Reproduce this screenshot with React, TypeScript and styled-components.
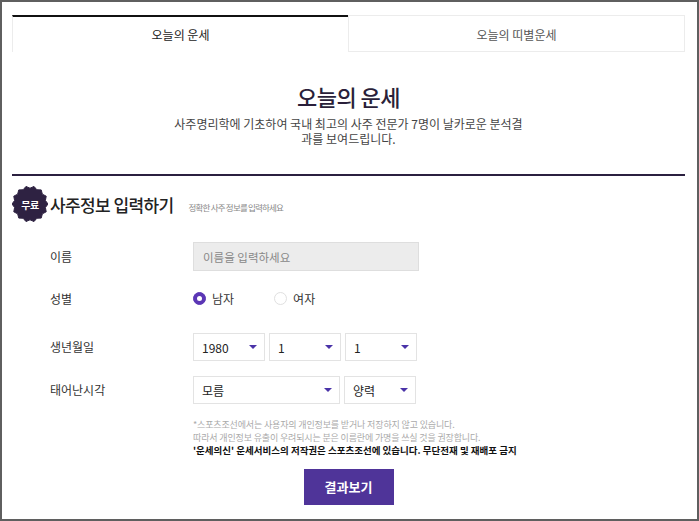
import React from "react";
import styled, { createGlobalStyle } from "styled-components";

const Global = createGlobalStyle`
  html, body { margin: 0; padding: 0; background: #fff; }
  body { font-family: "Noto Sans CJK KR", "Noto Sans", sans-serif; }
  * { box-sizing: border-box; }
`;

const Frame = styled.div`
  width: 699px;
  height: 521px;
  border: 2px solid #5f5f5f;
  padding: 13px 12px 0 10px;
  overflow: hidden;
`;

const Tabs = styled.div`
  display: grid;
  grid-template-columns: 336px 337px;
  height: 37px;
`;

const Tab = styled.div<{ $active?: boolean }>`
  display: flex;
  align-items: center;
  justify-content: center;
  font-size: 12px;
  color: ${(p) => (p.$active ? "#1a1a1a" : "#555")};
  border: 1px solid #ececec;
  border-top: ${(p) => (p.$active ? "2px solid #111" : "1px solid #ececec")};
  border-bottom: ${(p) => (p.$active ? "none" : "1px solid #ececec")};
  border-right: ${(p) => (p.$active ? "none" : "1px solid #ececec")};
  padding-top: ${(p) => (p.$active ? "0" : "1px")};
`;

const Hero = styled.div`
  display: flex;
  flex-direction: column;
  align-items: center;
  padding-top: 29px;
  height: 124px;
  border-bottom: 2px solid #2b2040;
`;

const Title = styled.h1`
  margin: 0;
  font-size: 22px;
  font-weight: 500;
  color: #2a1f3a;
  line-height: 30px;
  letter-spacing: -0.5px;
`;

const Sub = styled.p`
  margin: 6px 0 0;
  width: 352px;
  text-align: center;
  font-size: 12px;
  line-height: 14.5px;
  color: #444;
  word-break: break-all;
`;

const SectionHead = styled.div`
  display: flex;
  align-items: center;
  height: 56px;
`;

const Badge = styled.div`
  position: relative;
  width: 36px;
  height: 36px;
  display: flex;
  align-items: center;
  justify-content: center;
  flex-shrink: 0;
  svg { position: absolute; inset: 0; }
  span {
    position: relative;
    color: #fff;
    font-size: 10px;
    font-weight: 700;
    letter-spacing: -0.5px;
  }
`;

const SectionTitle = styled.h2`
  margin: 0 0 0 2px;
  font-size: 17px;
  font-weight: 500;
  color: #222;
  letter-spacing: -0.6px;
`;

const SectionHint = styled.span`
  margin: 5px 0 0 15px;
  font-size: 8.5px;
  color: #888;
  letter-spacing: -0.8px;
`;

const Form = styled.div`
  display: grid;
  grid-template-columns: 143px 1fr;
  padding: 10px 0 0 38px;
`;

const Label = styled.div<{ $h: number; $bottom?: boolean }>`
  height: ${(p) => p.$h}px;
  display: flex;
  align-items: ${(p) => (p.$bottom ? "flex-end" : "center")};
  padding-bottom: ${(p) => (p.$bottom ? "6px" : "0")};
  font-size: 12px;
  color: #333;
`;

const Field = styled.div<{ $h: number; $bottom?: boolean }>`
  height: ${(p) => p.$h}px;
  display: flex;
  align-items: ${(p) => (p.$bottom ? "flex-end" : "center")};
  gap: 4px;
`;

const TextInput = styled.div`
  width: 226px;
  height: 29px;
  background: #ececec;
  border: 1px solid #dedede;
  display: flex;
  align-items: center;
  padding-left: 9px;
  font-size: 11.5px;
  color: #888;
`;

const Radio = styled.div<{ $on?: boolean }>`
  width: 13px;
  height: 13px;
  border-radius: 50%;
  background: ${(p) => (p.$on ? "#5b36b5" : "#fff")};
  border: 1px solid ${(p) => (p.$on ? "#5b36b5" : "#e0e0e0")};
  display: flex;
  align-items: center;
  justify-content: center;
  &::after {
    content: "";
    width: 5px;
    height: 5px;
    border-radius: 50%;
    background: #fff;
    display: ${(p) => (p.$on ? "block" : "none")};
  }
`;

const RadioLabel = styled.span<{ $gap?: number }>`
  font-size: 12px;
  color: #333;
  margin-left: 2px;
  margin-right: ${(p) => p.$gap ?? 0}px;
`;

const Select = styled.div<{ $w: number }>`
  width: ${(p) => p.$w}px;
  height: 28px;
  border: 1px solid #e3e3e3;
  background: #fff;
  display: flex;
  align-items: center;
  justify-content: space-between;
  padding: 0 7px 0 8px;
  font-size: 12px;
  color: #222;
  font-family: "Noto Sans CJK KR", "Liberation Sans", sans-serif;
`;

const Arrow = styled.span`
  width: 0;
  height: 0;
  border-left: 4px solid transparent;
  border-right: 4px solid transparent;
  border-top: 4px solid #4a33a8;
`;

const Notes = styled.div`
  grid-column: 2;
  padding-top: 15px;
  font-size: 9px;
  line-height: 12.5px;
  color: #aaa;
  letter-spacing: -0.15px;
`;

const Strong = styled.div`
  color: #111;
  font-weight: 700;
  font-size: 9.5px;
  letter-spacing: 0;
`;

const ButtonRow = styled.div`
  display: flex;
  justify-content: center;
  padding-top: 12px;
`;

const Submit = styled.button`
  width: 90px;
  height: 36px;
  border: none;
  background: #4f3499;
  color: #fff;
  font-family: inherit;
  font-size: 13px;
  font-weight: 700;
`;

function Scallop() {
  const pts: string[] = [];
  const n = 28;
  for (let i = 0; i < n; i++) {
    const a = (i / n) * Math.PI * 2;
    const r = i % 2 === 0 ? 18 : 15.8;
    pts.push(`${(18 + r * Math.cos(a)).toFixed(2)},${(18 + r * Math.sin(a)).toFixed(2)}`);
  }
  return (
    <svg width="36" height="36" viewBox="0 0 36 36">
      <polygon points={pts.join(" ")} fill="#2e2242" strokeLinejoin="round" stroke="#2e2242" strokeWidth="1" />
    </svg>
  );
}

const SelectBox = ({ w, v }: { w: number; v: string }) => (
  <Select $w={w}>
    <span>{v}</span>
    <Arrow />
  </Select>
);

export default function App() {
  return (
    <>
      <Global />
      <Frame>
        <Tabs>
          <Tab $active>오늘의 운세</Tab>
          <Tab>오늘의 띠별운세</Tab>
        </Tabs>
        <Hero>
          <Title>오늘의 운세</Title>
          <Sub>사주명리학에 기초하여 국내 최고의 사주 전문가 7명이 날카로운 분석결과를 보여드립니다.</Sub>
        </Hero>
        <SectionHead>
          <Badge>
            <Scallop />
            <span>무료</span>
          </Badge>
          <SectionTitle>사주정보 입력하기</SectionTitle>
          <SectionHint>정확한 사주 정보를 입력하세요</SectionHint>
        </SectionHead>
        <Form>
          <Label $h={29}>이름</Label>
          <Field $h={29}>
            <TextInput>이름을 입력하세요</TextInput>
          </Field>

          <Label $h={54}>성별</Label>
          <Field $h={54}>
            <Radio $on />
            <RadioLabel $gap={36}>남자</RadioLabel>
            <Radio />
            <RadioLabel>여자</RadioLabel>
          </Field>

          <Label $h={36} $bottom>생년월일</Label>
          <Field $h={36} $bottom>
            <SelectBox w={72} v="1980" />
            <SelectBox w={72} v="1" />
            <SelectBox w={72} v="1" />
          </Field>

          <Label $h={43} $bottom>태어난시각</Label>
          <Field $h={43} $bottom>
            <SelectBox w={147} v="모름" />
            <SelectBox w={72} v="양력" />
          </Field>

          <Notes>
            <div>*스포츠조선에서는 사용자의 개인정보를 받거나 저장하지 않고 있습니다.</div>
            <div>따라서 개인정보 유출이 우려되시는 분은 이름란에 가명을 쓰실 것을 권장합니다.</div>
            <Strong>'운세의신' 운세서비스의 저작권은 스포츠조선에 있습니다. 무단전재 및 재배포 금지</Strong>
          </Notes>
        </Form>
        <ButtonRow>
          <Submit>결과보기</Submit>
        </ButtonRow>
      </Frame>
    </>
  );
}
